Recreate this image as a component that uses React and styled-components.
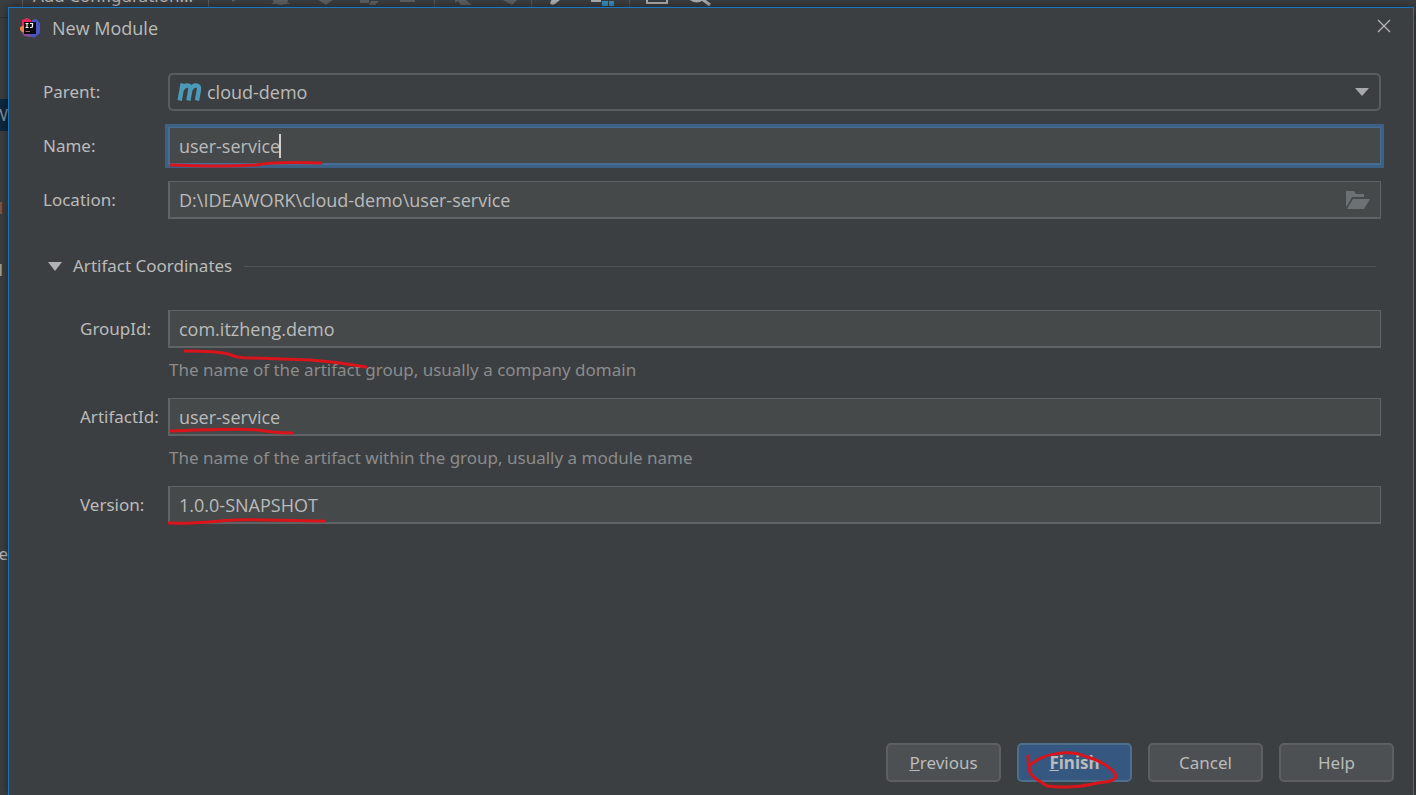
import styled, { createGlobalStyle } from 'styled-components';

import { useState } from 'react';

const color = {
    base: '#3c3f41',
    field: '#45494a',
    fieldBorder: '#606365',
    text: '#bbbbbb',
    hint: '#8a8c8d',
    focus: '#3d6185',
    windowBorder: '#1b78c0',
    pen: '#d9141a',
};

const font = {
    label: '17px/24px "Noto Sans", "Open Sans", sans-serif',
    value: '18px/24px "Open Sans", "Noto Sans", sans-serif',
};

const GlobalStyle = createGlobalStyle`
    * {
        box-sizing: border-box;
    }
    body {
        margin: 0;
        background-color: ${color.base};
        color: ${color.text};
        font: ${font.label};
    }
    button, input, select {
        font: inherit;
        color: inherit;
    }
`;

/* editor window behind the dialog */

const Desktop = styled.div`
    position: relative;
    height: 100vh;
    overflow: hidden;
`;

const Toolbar = styled.div`
    display: flex;
    align-items: flex-end;
    height: 18px;
    padding: 0 0 9px 22px;
    border-bottom: 1px solid #323232;
    overflow: hidden;
`;

const RunConfig = styled.div`
    width: 187px;
    padding-left: 10px;
    border-left: 1px solid #5e6060;
    border-right: 1px solid #5e6060;
    white-space: nowrap;
`;

const ToolIcons = styled.svg`
    display: block;
    width: 520px;
    height: 9px;
`;

const Gutter = styled.div`
    display: flex;
    flex-direction: column;
    width: 8px;
`;

const GutterRow = styled.div`
    display: flex;
    justify-content: flex-end;
    align-items: center;
    height: 32px;
    margin-top: ${props => props.$gap}px;
    padding-right: ${props => props.$inset || 0}px;
    background-color: ${props => props.$selected ? '#0d293e' : 'transparent'};
    color: ${props => props.$tone || color.text};
    overflow: hidden;
`;

/* dialog */

const Dialog = styled.form`
    position: absolute;
    inset: 7px 2px 0 8px;
    display: flex;
    flex-direction: column;
    background-color: ${color.base};
    border: 1px solid ${color.windowBorder};
    border-bottom: none;
    box-shadow: 0 0 10px rgb(0 0 0 / 50%);
`;

const TitleBar = styled.header`
    display: flex;
    align-items: center;
    gap: 12px;
    height: 40px;
    padding: 0 22px 0 11px;
`;

const Title = styled.h1`
    flex: 1;
    margin: 0;
    font: ${font.value};
`;

const CloseButton = styled.button`
    display: flex;
    padding: 0 0 4px;
    border: none;
    background: none;
    cursor: pointer;
`;

const Body = styled.main`
    flex: 1;
    padding: 25px 32px 0 34px;
`;

const Rows = styled.div`
    display: flex;
    flex-direction: column;
    gap: ${props => props.$gap}px;
    padding-left: ${props => props.$indent || 0}px;
`;

const Row = styled.div`
    display: grid;
    grid-template-columns: ${props => props.$label}px 1fr;
    align-items: center;
`;

const Label = styled.label`
    white-space: nowrap;
`;

const Control = styled.div`
    position: relative;
    display: flex;
`;

const Input = styled.input`
    width: 100%;
    height: 38px;
    padding: 0 9px;
    border: 2px solid ${color.fieldBorder};
    border-top-width: 1px;
    border-right-width: 1px;
    background-color: ${color.field};
    font: ${font.value};
    outline: ${props => props.$focused ? `3px solid ${color.focus}` : 'none'};
    border-color: ${props => props.$focused ? '#466d94' : color.fieldBorder};
`;

const Select = styled.select`
    width: 100%;
    height: 38px;
    padding: 0 40px 0 37px;
    appearance: none;
    border: 2px solid #5a5d5f;
    border-radius: 5px;
    background-color: ${color.base};
    font: ${font.value};
    outline: none;
`;

const Adornment = styled.svg`
    position: absolute;
    top: 0;
    bottom: 0;
    margin: auto 0;
    left: ${props => props.$left};
    right: ${props => props.$right};
    pointer-events: none;
`;

const Caret = styled.span`
    position: absolute;
    top: 7px;
    left: 111px;
    width: 2px;
    height: 24px;
    background-color: #d0d0d0;
`;

const PenStroke = styled.svg`
    position: absolute;
    top: 0;
    left: 0;
    overflow: visible;
    pointer-events: none;
    fill: none;
    stroke: ${color.pen};
    stroke-width: 3;
    stroke-linecap: round;
    stroke-linejoin: round;
`;

const Hint = styled.p`
    grid-column: 2;
    margin: 10px 0 0 1px;
    color: ${color.hint};
`;

const SectionHeader = styled.div`
    display: flex;
    align-items: center;
    gap: 12px;
    margin: 35px 5px 32px 5px;
`;

const SectionToggle = styled.button`
    display: flex;
    align-items: center;
    gap: 11px;
    padding: 0;
    border: none;
    background: none;
    cursor: pointer;
`;

const Rule = styled.hr`
    flex: 1;
    margin: 0;
    border: none;
    border-top: 1px solid #515457;
`;

const Footer = styled.footer`
    display: flex;
    justify-content: flex-end;
    gap: 16px;
    padding: 0 19px 13px;
`;

const Button = styled.button`
    position: relative;
    width: 115px;
    height: 39px;
    padding: 0;
    border: 2px solid ${props => props.$primary ? '#4c708c' : '#5e6060'};
    border-radius: 5px;
    background-color: ${props => props.$primary ? '#365880' : '#4c5052'};
    font-weight: ${props => props.$primary ? 700 : 400};
    cursor: pointer;
`;

const Logo = () => (
    <svg width="20" height="20" viewBox="0 0 20 20" aria-hidden="true">
        <path d="M2 2 7 0 11 2 11 8 2 9Z" fill="#e8265e" />
        <path d="M0 9 5 7 6 14 3 15 0 12Z" fill="#f0804a" />
        <path d="M2 15 8 12 13 17 11 19 4 18Z" fill="#8a4a9c" />
        <path d="M12 2 16 1 20 5 20 15 14 20 10 17Z" fill="#4a55c8" />
        <rect x="4" y="4" width="12" height="12" fill="#0a0a0c" />
        <path d="M5.500 5.500H8.500M7 5.500V9.500M5.500 9.500H8.500M10 5.500H12.500V8.500Q12.500 9.500 11 9.500H10" fill="none" stroke="#f4f4f4" strokeWidth="1.200" />
        <path d="M5.500 13.500H10" stroke="#a06a70" strokeWidth="1" />
    </svg>
);

const MavenIcon = () => (
    <Adornment $left="9px" width="25" height="18" viewBox="0 0 25 18" fill="none" stroke="#4a9ab8" strokeWidth="4.400" aria-hidden="true">
        <path d="M2.700 17.500 5.700 0.500" />
        <path d="M4.500 7Q7 2.500 10.500 2.500Q14 2.500 13.400 6.500L11.400 17.500" />
        <path d="M13 7Q15.500 2.500 19 2.500Q22.600 2.500 22 6.500L20 17.500" />
    </Adornment>
);

const FolderIcon = () => (
    <Adornment $right="11px" width="24" height="18" viewBox="0 0 24 18" fill="#6c7174" aria-hidden="true">
        <path d="M0 0H8L10 3H18V6H6L1 15H0Z" />
        <path d="M7 8H24L18 18H1Z" />
    </Adornment>
);

const Triangle = () => (
    <svg width="14" height="9" viewBox="0 0 14 9" fill="#b0b2b3" aria-hidden="true">
        <path d="M0 0H14L7 9Z" />
    </svg>
);

const Field = ({ id, label, labelWidth, value, hint, focused, stroke, children }) => (
    <Row $label={labelWidth}>
        <Label htmlFor={id}>{label}</Label>
        <Control>
            <Input id={id} defaultValue={value} $focused={focused} spellCheck={false} />
            {children}
            {stroke && <PenStroke width="200" height="38" aria-hidden="true"><path d={stroke} /></PenStroke>}
        </Control>
        {hint && <Hint>{hint}</Hint>}
    </Row>
);

const artifactFields = [
    {
        id: 'groupId',
        label: 'GroupId:',
        value: 'com.itzheng.demo',
        hint: 'The name of the artifact group, usually a company domain',
        stroke: 'M17 41C35 41 49 41 60 44C68 47 72 48 84 48L142 50C162 51 178 54 198 57',
    },
    {
        id: 'artifactId',
        label: 'ArtifactId:',
        value: 'user-service',
        hint: 'The name of the artifact within the group, usually a module name',
        stroke: 'M3 33C28 32 72 30 90 32C102 34 112 35 124 35',
    },
    {
        id: 'version',
        label: 'Version:',
        value: '1.0.0-SNAPSHOT',
        stroke: 'M1 37C30 38 45 35 66 34C90 33 120 35 156 35',
    },
];

const App = () => {
    const [open, setOpen] = useState(true);
    return (
        <Desktop>
            <GlobalStyle />
            <Toolbar>
                <RunConfig>Add Configuration...</RunConfig>
                <ToolIcons viewBox="0 0 520 9" fill="#5f6162" aria-hidden="true">
                    <path d="M23 0H29L23 3ZM63 0H80L78 3 81 5H76Q72 7 68 5H62L65 3ZM108 0H125L117 6Z" />
                    <path d="M151 0H160V4H151ZM162 2H170L166 6H160ZM191 0H206V3H191ZM246 0Q252 -3 258 2L263 6H252L249 2 246 4ZM292 0H309L303 6Z" />
                    <path d="M225 0H226V9H225ZM322 0H323V9H322ZM420 0H421V9H420Z" fill="#555758" />
                    <path d="M343 0H352L346 5Q342 7 341 4ZM382 0H392V3H382Z" fill="#afb1b3" />
                    <path d="M393 2H399V7H393ZM400 2H405V7H400Z" fill="#3592c4" />
                    <path d="M438 0V4H458V0M442 0H446" fill="none" stroke="#afb1b3" strokeWidth="2" />
                    <path d="M482 0Q488 4 493 0L501 6" fill="none" stroke="#afb1b3" strokeWidth="3" />
                </ToolIcons>
            </Toolbar>
            <Gutter>
                <GutterRow $gap={81} $selected $tone="#8b9399">W</GutterRow>
                <GutterRow $gap={61} $inset={5} $tone="#a5543f">l</GutterRow>
                <GutterRow $gap={30} $inset={5} $tone="#c2a58c">l</GutterRow>
                <GutterRow $gap={252}>e</GutterRow>
            </Gutter>
            <Dialog onSubmit={e => e.preventDefault()}>
                <TitleBar>
                    <Logo />
                    <Title>New Module</Title>
                    <CloseButton type="button" aria-label="Close">
                        <svg width="14" height="14" viewBox="0 0 14 14" stroke="#b4b6b7" strokeWidth="1.300">
                            <path d="M1 1 13 13M13 1 1 13" />
                        </svg>
                    </CloseButton>
                </TitleBar>
                <Body>
                    <Rows $gap={16}>
                        <Row $label={125}>
                            <Label htmlFor="parent">Parent:</Label>
                            <Control>
                                <Select id="parent" defaultValue="cloud-demo">
                                    <option>cloud-demo</option>
                                </Select>
                                <MavenIcon />
                                <Adornment $right="12px" width="14" height="8" viewBox="0 0 14 8" fill="#a6a8a9" aria-hidden="true">
                                    <path d="M0 0H14L7 8Z" />
                                </Adornment>
                            </Control>
                        </Row>
                        <Field
                            id="name"
                            label="Name:"
                            labelWidth={125}
                            value="user-service"
                            focused
                            stroke="M3 38C30 39 68 39 88 38C105 35 122 35 153 36"
                        >
                            <Caret />
                        </Field>
                        <Field id="location" label="Location:" labelWidth={125} value="D:\IDEAWORK\cloud-demo\user-service">
                            <FolderIcon />
                        </Field>
                    </Rows>
                    <SectionHeader>
                        <SectionToggle type="button" aria-expanded={open} onClick={() => setOpen(!open)}>
                            <Triangle />
                            Artifact Coordinates
                        </SectionToggle>
                        <Rule />
                    </SectionHeader>
                    {open && (
                        <Rows $gap={16} $indent={37}>
                            {artifactFields.map(field => <Field key={field.id} labelWidth={88} {...field} />)}
                        </Rows>
                    )}
                </Body>
                <Footer>
                    <Button type="button"><u>P</u>revious</Button>
                    <Button type="submit" $primary>
                        <u>F</u>inish
                        <PenStroke width="115" height="39" aria-hidden="true">
                            <path d="M9 11 10 25M10 21C24 8 50 4 68 12C84 16 96 26 97 31C97 36 88 37 78 38C64 42 42 43 28 41C18 34 10 32 10 21" />
                        </PenStroke>
                    </Button>
                    <Button type="button">Cancel</Button>
                    <Button type="button">Help</Button>
                </Footer>
            </Dialog>
        </Desktop>
    );
};

export default App;
